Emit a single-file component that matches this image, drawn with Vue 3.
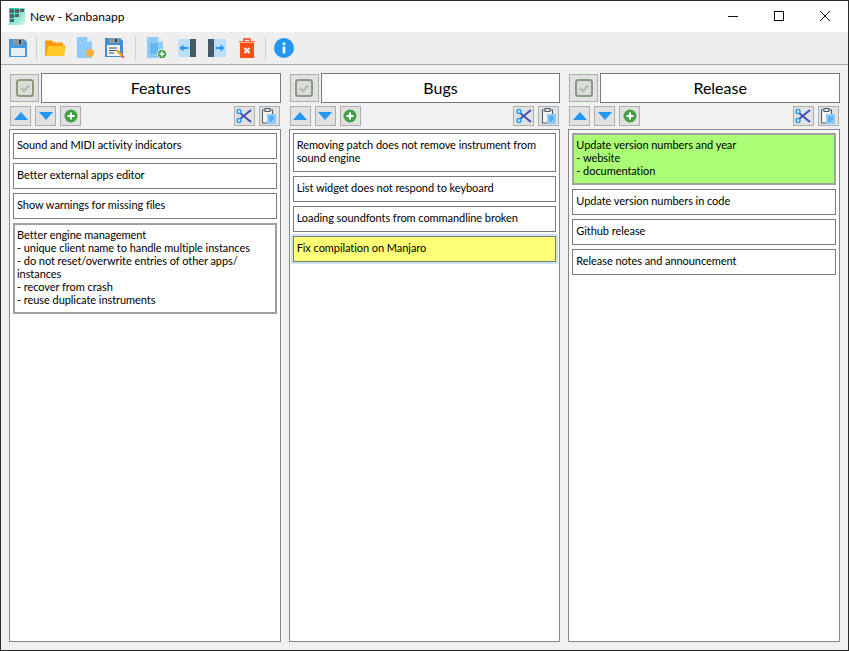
<script setup>
const columns = [
  { title: 'Features', cards: [
    { text: 'Sound and MIDI activity indicators' },
    { text: 'Better external apps editor' },
    { text: 'Show warnings for missing files' },
    { text: 'Better engine management\n- unique client name to handle multiple instances\n- do not reset/overwrite entries of other apps/\ninstances\n- recover from crash\n- reuse duplicate instruments', cls: 'selected' },
  ]},
  { title: 'Bugs', cards: [
    { text: 'Removing patch does not remove instrument from\nsound engine' },
    { text: 'List widget does not respond to keyboard' },
    { text: 'Loading soundfonts from commandline broken' },
    { text: 'Fix compilation on Manjaro', cls: 'yellow' },
  ]},
  { title: 'Release', cards: [
    { text: 'Update version numbers and year\n- website\n- documentation', cls: 'green' },
    { text: 'Update version numbers in code' },
    { text: 'Github release' },
    { text: 'Release notes and announcement' },
  ]},
]
</script>

<template>
  <div class="window">
    <header class="titlebar">
      <svg class="logo" width="16" height="17" viewBox="0 0 16 17">
        <defs>
          <linearGradient id="lg" x1="0" y1="0" x2="1" y2="1">
            <stop offset="0" stop-color="#14d8a4" />
            <stop offset="1" stop-color="#e2f4ee" />
          </linearGradient>
        </defs>
        <rect width="16" height="17" fill="url(#lg)" />
        <rect x="1" y="1" width="4" height="4" fill="#5a6068" />
        <rect x="6" y="1" width="4" height="4" fill="#5a6068" />
        <rect x="11" y="1" width="4" height="3" fill="#5a6068" />
        <rect x="1" y="6" width="4" height="4" fill="#5a6068" />
        <rect x="6" y="6" width="4" height="3" fill="#5a6068" />
        <rect x="1" y="11" width="4" height="3" fill="#5a6068" />
      </svg>
      <span class="wintitle">New - Kanbanapp</span>
      <div class="winbtns">
        <svg width="46" height="32" viewBox="0 0 46 32"><path d="M18 15.5h10" stroke="#111" fill="none" /></svg>
        <svg width="46" height="32" viewBox="0 0 46 32"><rect x="18.5" y="10.5" width="9" height="9" stroke="#111" fill="none" /></svg>
        <svg width="46" height="32" viewBox="0 0 46 32"><path d="M18 10l10 10M28 10l-10 10" stroke="#111" fill="none" /></svg>
      </div>
    </header>

    <nav class="toolbar">
      <button class="tool">
        <svg width="20" height="20" viewBox="0 0 20 20"><path d="M1 1h15l3 3v15H1z" fill="#3f9bdc" /><rect x="5" y="1" width="10" height="6" fill="#8a98a4" /><rect x="11" y="2" width="2" height="4" fill="#2f3c48" /><rect x="3" y="10" width="14" height="8" fill="#e8eef2" /></svg>
      </button>
      <i class="sep"></i>
      <button class="tool">
        <svg width="22" height="20" viewBox="0 0 22 20"><path d="M1 3.500q0-1 1-1h6l2 2h8q1 0 1 1V8H1z" fill="#fb9d0b" /><path d="M1 8l2-1h18l-1 11H2.500L1 17z" fill="#fb9d0b" /><path d="M4 8h17q.8 0 .6 1L20 18H2z" fill="#ffca28" /></svg>
      </button>
      <button class="tool">
        <svg width="20" height="22" viewBox="0 0 20 22"><path d="M2 0h10l5 5v16H2z" fill="#90caf9" /><path d="M12 0l5 5h-5z" fill="#d5e9fb" /><circle cx="15" cy="16" r="4" fill="#fbb03b" /></svg>
      </button>
      <button class="tool">
        <svg width="20" height="20" viewBox="0 0 20 20"><path d="M0 0h15l3 3v16H0z" fill="#3f8fd2" /><rect x="4" y="0" width="10" height="5" fill="#8a98a4" /><rect x="10" y="1" width="2" height="3" fill="#2f3c48" /><rect x="2" y="7" width="13" height="11" fill="#f2f5f7" /><path d="M4 10h8M4 12.500h7M4 15h5" stroke="#3a4a58" /><path d="M12 12l5 6" stroke="#fb9d0b" stroke-width="2.500" /><path d="M17 18l2 2" stroke="#e85a5a" stroke-width="2" /></svg>
      </button>
      <i class="sep wide"></i>
      <button class="tool">
        <svg width="22" height="22" viewBox="0 0 22 22"><path d="M1 0h11l5 5v16H1z" fill="#90caf9" /><path d="M12 0l5 5h-5z" fill="#d5e9fb" /><rect x="4" y="6" width="8" height="11" fill="#64b5f6" /><circle cx="16" cy="17" r="5" fill="#fff" /><circle cx="16" cy="17" r="4.300" fill="#43a047" /><path d="M13.500 17h5M16 14.500v5" stroke="#fff" stroke-width="1.500" /></svg>
      </button>
      <button class="tool">
        <svg width="18" height="18" viewBox="0 0 18 18"><rect width="18" height="18" fill="#bbdefb" /><rect x="12" width="6" height="18" fill="#455a64" /><path d="M1.500 9l4-3.500v2.500h5v2h-5v2.500z" fill="#2196f3" /></svg>
      </button>
      <button class="tool">
        <svg width="18" height="18" viewBox="0 0 18 18"><rect width="18" height="18" fill="#bbdefb" /><rect width="6" height="18" fill="#455a64" /><path d="M16.500 9l-4-3.500v2.500h-5v2h5v2.500z" fill="#2196f3" /></svg>
      </button>
      <button class="tool">
        <svg width="18" height="20" viewBox="0 0 18 20"><path d="M1 3h16v1.500H1z" fill="#ff7043" /><path d="M6 3V1h6v2" fill="none" stroke="#e64a19" stroke-width="1.500" /><path d="M2 5h14v15H2z" fill="#ff4d16" /><path d="M6.500 10l5 5M11.500 10l-5 5" stroke="#fff" stroke-width="2" /></svg>
      </button>
      <i class="sep"></i>
      <button class="tool">
        <svg width="20" height="20" viewBox="0 0 20 20"><circle cx="10" cy="10" r="10" fill="#2196f3" /><rect x="8.700" y="8.500" width="2.600" height="7" fill="#fff" /><rect x="8.700" y="4.500" width="2.600" height="2.600" fill="#fff" /></svg>
      </button>
    </nav>

    <main class="board">
      <section v-for="col in columns" :key="col.title" class="column">
        <div class="head">
          <button class="check">
            <svg width="18" height="18" viewBox="0 0 18 18"><rect x="1" y="1" width="16" height="16" rx="2.500" fill="#dcdcd8" stroke="#8a9a7e" stroke-width="2" /><path d="M5 9l3 3 5-5.500" fill="none" stroke="#b4b8b4" stroke-width="2" /></svg>
          </button>
          <div class="title">{{ col.title }}</div>
        </div>
        <div class="actions">
          <button class="mini">
            <svg width="14" height="8" viewBox="0 0 14 8"><path d="M7 0l7 8H0z" fill="#2196f3" /></svg>
          </button>
          <button class="mini">
            <svg width="14" height="8" viewBox="0 0 14 8"><path d="M7 8l7-8H0z" fill="#2196f3" /></svg>
          </button>
          <button class="mini">
            <svg width="14" height="14" viewBox="0 0 14 14"><circle cx="7" cy="7" r="6.500" fill="#43a047" /><path d="M3.500 7h7M7 3.500v7" stroke="#fff" stroke-width="2" /></svg>
          </button>
          <span class="spacer"></span>
          <button class="mini">
            <svg width="16" height="16" viewBox="0 0 16 16"><path d="M4 5l11 9M4 11L15 2" stroke="#3f51b5" stroke-width="2" fill="none" /><circle cx="3" cy="3.500" r="2" fill="none" stroke="#29a0f0" stroke-width="1.500" /><circle cx="3" cy="12.500" r="2" fill="none" stroke="#29a0f0" stroke-width="1.500" /></svg>
          </button>
          <button class="mini">
            <svg width="16" height="16" viewBox="0 0 16 16"><rect x="1.500" y="2" width="10" height="13" fill="#f4f4f4" stroke="#4a5a64" /><rect x="4" y="0.500" width="5" height="3" fill="#dfe4e8" stroke="#4a5a64" /><rect x="6" y="6" width="9" height="10" fill="#90caf9" /><path d="M8 9h5M8 11h5M8 13h3" stroke="#2196f3" /></svg>
          </button>
        </div>
        <div class="list">
          <div v-for="(card, i) in col.cards" :key="i" class="card" :class="card.cls">{{ card.text }}</div>
        </div>
      </section>
    </main>
  </div>
</template>

<style>
html, body { margin: 0; background: #f0f0f0; }
</style>

<style scoped>
.window {
  box-sizing: border-box;
  width: 849px;
  height: 651px;
  display: flex;
  flex-direction: column;
  background: #f0f0f0;
  border: 1px solid #2b2b2b;
  font-family: Lato, "Noto Sans", sans-serif;
  color: #000;
}
.titlebar {
  height: 31px;
  flex: none;
  display: flex;
  align-items: center;
  background: #fff;
  padding-left: 8px;
}
.logo { margin-right: 5px; }
.wintitle { font-size: 12px; flex: 1; }
.winbtns { display: flex; height: 31px; }
.winbtns svg { display: block; }
.toolbar {
  height: 32px;
  flex: none;
  display: flex;
  align-items: center;
  padding-left: 2px;
  border-bottom: 1px solid #a8a8a8;
  background: #eeeeee;
}
.tool {
  width: 30px;
  height: 26px;
  padding: 0;
  border: 0;
  background: none;
  display: flex;
  align-items: center;
  justify-content: center;
}
.sep {
  flex: none;
  width: 1px;
  height: 25px;
  margin: 0 3px;
  background: #cfcfcf;
}
.sep.wide { margin: 0 6px 0 5px; }
.board {
  flex: 1;
  min-height: 0;
  display: grid;
  grid-template-columns: repeat(3, 1fr);
  gap: 8px;
  padding: 8px;
}
.column {
  min-width: 0;
  display: flex;
  flex-direction: column;
}
.head {
  height: 30px;
  flex: none;
  display: flex;
  align-items: center;
  gap: 2px;
  padding-left: 1px;
}
.check {
  box-sizing: border-box;
  width: 29px;
  height: 28px;
  padding: 0;
  border: 1px solid #adadad;
  background: #e1e1e1;
  display: flex;
  align-items: center;
  justify-content: center;
}
.title {
  box-sizing: border-box;
  flex: 1;
  height: 30px;
  line-height: 28px;
  text-align: center;
  background: #fff;
  border: 1px solid #7a7a7a;
  font-size: 16px;
}
.actions {
  height: 20px;
  flex: none;
  margin-top: 3px;
  padding: 0 1px;
  display: flex;
  gap: 4px;
}
.spacer { flex: 1; }
.mini {
  box-sizing: border-box;
  width: 21px;
  height: 20px;
  padding: 0;
  border: 1px solid #adadad;
  background: #e1e1e1;
  display: flex;
  align-items: center;
  justify-content: center;
}
.list {
  flex: 1;
  min-height: 0;
  margin-top: 3px;
  box-sizing: border-box;
  background: #fff;
  border: 1px solid #828790;
  padding: 3px;
  display: flex;
  flex-direction: column;
  gap: 4px;
}
.card {
  box-sizing: border-box;
  padding: 4px 3px 7px;
  background: #fff;
  border: 1px solid #7a7a7a;
  font-size: 11px;
  line-height: 13px;
  letter-spacing: -0.06px;
  white-space: pre-line;
}
.selected {
  border: 2px solid #a0a0a0;
  padding: 3px 2px 6px;
}
.green {
  background: #aaff77;
  border: 2px solid #a0a0a0;
  padding: 3px 2px 6px;
}
.yellow {
  background: #ffff77;
  box-shadow: 0 0 0 2px #cce4f7;
}
</style>
